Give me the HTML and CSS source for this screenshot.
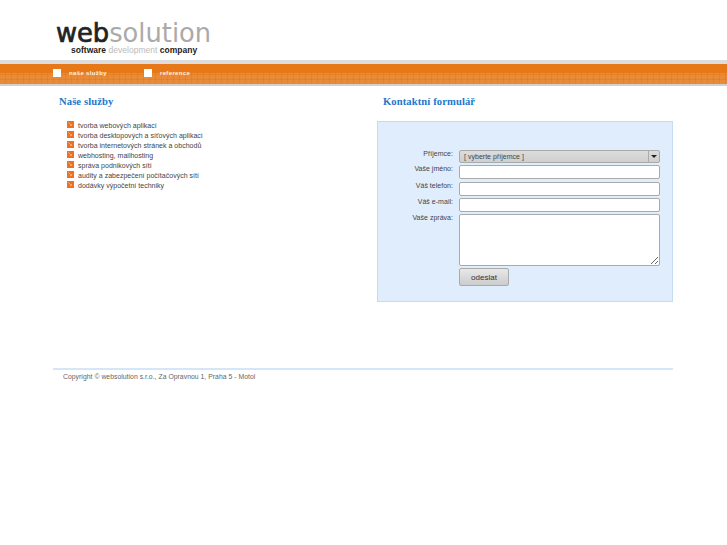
FILE: index.html
```html
<!DOCTYPE html>
<html lang="cs">
<head>
    <meta charset="UTF-8">
    <title>websolution</title>
    <link rel="stylesheet" href="styles.css">
</head>
<body>
    <div class="header">
        <div class="logo">
            <div class="logo-name"><b>web</b><span>solution</span></div>
            <div class="logo-sub">software <span>development</span> company</div>
        </div>
    </div>
    <div class="menu">
        <a class="menu-item" href="#">naše služby</a>
        <a class="menu-item" href="#">reference</a>
    </div>
    <div class="content">
        <div class="services">
            <h2>Naše služby</h2>
            <ul>
                <li><svg class="bullet" viewBox="0 0 7 7"><rect width="7" height="7" fill="#ee7020"/><path d="M1 1L4.5 4.5M4.5 3V4.5H3" fill="none" stroke="#f9b98a" stroke-width="0.7"/></svg>tvorba webových aplikací</li>
                <li><svg class="bullet" viewBox="0 0 7 7"><rect width="7" height="7" fill="#ee7020"/><path d="M1 1L4.5 4.5M4.5 3V4.5H3" fill="none" stroke="#f9b98a" stroke-width="0.7"/></svg>tvorba desktopových a síťových aplikací</li>
                <li><svg class="bullet" viewBox="0 0 7 7"><rect width="7" height="7" fill="#ee7020"/><path d="M1 1L4.5 4.5M4.5 3V4.5H3" fill="none" stroke="#f9b98a" stroke-width="0.7"/></svg>tvorba internetových stránek a obchodů</li>
                <li><svg class="bullet" viewBox="0 0 7 7"><rect width="7" height="7" fill="#ee7020"/><path d="M1 1L4.5 4.5M4.5 3V4.5H3" fill="none" stroke="#f9b98a" stroke-width="0.7"/></svg>webhosting, mailhosting</li>
                <li><svg class="bullet" viewBox="0 0 7 7"><rect width="7" height="7" fill="#ee7020"/><path d="M1 1L4.5 4.5M4.5 3V4.5H3" fill="none" stroke="#f9b98a" stroke-width="0.7"/></svg>správa podnikových sítí</li>
                <li><svg class="bullet" viewBox="0 0 7 7"><rect width="7" height="7" fill="#ee7020"/><path d="M1 1L4.5 4.5M4.5 3V4.5H3" fill="none" stroke="#f9b98a" stroke-width="0.7"/></svg>audity a zabezpečení počítačových sítí</li>
                <li><svg class="bullet" viewBox="0 0 7 7"><rect width="7" height="7" fill="#ee7020"/><path d="M1 1L4.5 4.5M4.5 3V4.5H3" fill="none" stroke="#f9b98a" stroke-width="0.7"/></svg>dodávky výpočetní techniky</li>
            </ul>
        </div>
        <div class="contact">
            <h2>Kontaktní formulář</h2>
            <form class="contact-form">
                <label>Příjemce:</label>
                <div class="select"><span class="select-text">[ vyberte příjemce ]</span><span class="select-arrow"></span></div>
                <label>Vaše jméno:</label>
                <input type="text">
                <label>Váš telefon:</label>
                <input type="text">
                <label>Váš e-mail:</label>
                <input type="text">
                <label>Vaše zpráva:</label>
                <textarea></textarea>
                <div></div>
                <button type="button">odeslat</button>
            </form>
        </div>
    </div>
    <div class="footer">Copyright © websolution s.r.o., Za Opravnou 1, Praha 5 - Motol</div>
</body>
</html>
```

FILE: styles.css
```css
body {
    margin: 0;
    background-color: #ffffff;
    color: #444444;
    font-family: "Liberation Sans", Arial, sans-serif;
    font-size: 7px;
    letter-spacing: 0.02px;
}
.header {
    height: 60px;
    padding-left: 56px;
    box-sizing: border-box;
    padding-top: 21px;
}
.logo-name {
    font-family: "DejaVu Sans", sans-serif;
    font-size: 25.7px;
    line-height: 24px;
    color: #aaaaaa;
}
.logo-name b {
    color: #222222;
    font-weight: normal;
    -webkit-text-stroke: 0.7px #222222;
}
.logo-sub {
    margin-left: 15px;
    font-size: 8.5px;
    line-height: 10px;
    font-weight: bold;
    color: #222222;
}
.logo-sub span {
    color: #bbbbbb;
    font-weight: normal;
}
.menu {
    height: 20px;
    border-top: 4px solid #dddddd;
    border-bottom: 2px solid #d0d0d0;
    background-color: #e67817;
    background-image:
        repeating-linear-gradient(0deg, rgba(255,255,255,0.07) 0 4px, transparent 4px 5px),
        repeating-linear-gradient(90deg, rgba(255,255,255,0.07) 0 5px, transparent 5px 6px);
    background-size: 100% 11px;
    background-position: 0 bottom;
    background-repeat: no-repeat;
    display: flex;
    padding-left: 53px;
}
.menu-item {
    width: 91px;
    display: flex;
    align-items: center;
    gap: 8px;
    height: 18px;
    color: #fff3e6;
    font-size: 6px;
    font-weight: bold;
    letter-spacing: 0.35px;
    text-decoration: none;
}
.menu-item::before {
    content: "";
    width: 8px;
    height: 8px;
    background-color: #ffffff;
}
.content {
    display: flex;
    margin-left: 53px;
    width: 620px;
    height: 282px;
    border-bottom: 2px solid #d5e6f8;
}
h2 {
    margin: 0;
    font-family: "Liberation Serif", serif;
    font-size: 10.6px;
    line-height: 15px;
    letter-spacing: 0.1px;
    font-weight: bold;
    color: #2277cc;
}
.services {
    width: 324px;
    padding-top: 8px;
    box-sizing: border-box;
    padding-left: 6px;
}
.services ul {
    list-style: none;
    margin: 12px 0 0 8px;
    padding: 0;
}
.services li {
    display: flex;
    gap: 4px;
    height: 10px;
    line-height: 10px;
}
.bullet {
    flex: none;
    width: 7px;
    height: 7px;
}
.contact {
    width: 296px;
    padding-top: 8px;
}
.contact h2 {
    margin-left: 6px;
    margin-bottom: 12px;
}
.contact-form {
    height: 181px;
    padding: 28px 13px 0 0;
    border: 1px solid #c2dcf5;
    background-color: #e0edfd;
    display: grid;
    grid-template-columns: 75px 201px;
    grid-template-rows: 13px 14px 14px 14px 52px 18px;
    gap: 2.3px 6px;
    align-content: start;
    box-sizing: border-box;
    justify-content: start;
}
.contact-form label {
    text-align: right;
    line-height: 8px;
}
.select, .contact-form input, .contact-form textarea {
    box-sizing: border-box;
    margin: 0;
    width: 201px;
    border: 1px solid #aaaaaa;
    border-radius: 2px;
    background-color: #ffffff;
}
.contact-form textarea {
    height: 52px;
}
.select {
    display: flex;
    height: 13px;
    background: linear-gradient(#dcdcdc, #cfcfcf);
}
.select-text {
    flex: 1;
    padding-left: 4px;
    line-height: 12px;
}
.select-arrow {
    width: 10px;
    border-left: 1px solid #aaaaaa;
    position: relative;
}
.select-arrow::after {
    content: "";
    position: absolute;
    left: 2px;
    top: 4px;
    border: 3px solid transparent;
    border-top: 3px solid #222222;
    border-bottom: 0;
}
button {
    width: 50px;
    height: 18px;
    padding: 0;
    font-family: inherit;
    font-size: 8px;
    color: #333333;
    border: 1px solid #aaaaaa;
    border-radius: 2px;
    background: linear-gradient(#e8e8e8, #cccccc);
}
.footer {
    margin-left: 63px;
    margin-top: 2px;
    font-size: 6.85px;
    color: #666666;
    line-height: 10px;
}
```
